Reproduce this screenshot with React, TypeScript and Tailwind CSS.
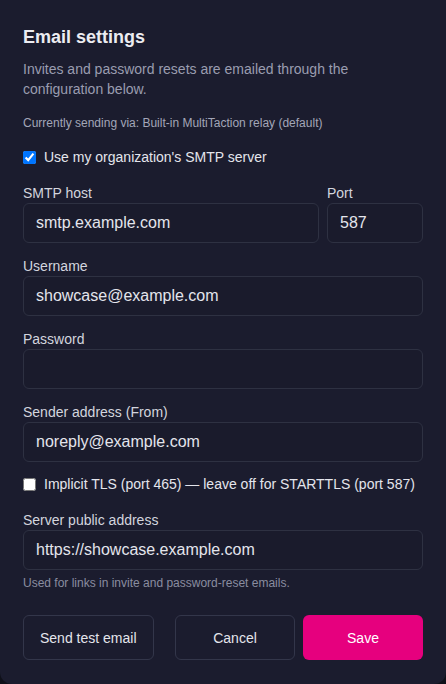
import React from "react";

function Field({ label, value, className = "" }: { label: string; value: string; className?: string }) {
  return (
    <label className={"flex flex-col " + className}>
      <span className="text-sm leading-5 text-[#d3d5de]">{label}</span>
      <input
        readOnly
        value={value}
        className="h-10 w-full rounded-md border border-[#2e3142] bg-[#1a1b2c] px-3 text-base text-[#e4e5ec] outline-none"
      />
    </label>
  );
}

export default function App() {
  return (
    <div
      className="min-h-[684px] w-full bg-[#0f1019]"
      style={{ fontFamily: '"Liberation Sans", Arial, sans-serif' }}
    >
      <div className="flex h-[684px] flex-col rounded-b-xl bg-[#1b1c2e] p-[23px]">
        <h2 className="text-lg font-bold leading-7 text-[#ececf1]">Email settings</h2>
        <p className="mt-2 text-sm leading-5 text-[#9a9db0]">
          Invites and password resets are emailed through the configuration below.
        </p>
        <p className="mt-4 text-xs leading-4 text-[#a3a6b8]">
          Currently sending via: Built-in MultiTaction relay (default)
        </p>
        <label className="mt-4 flex h-5 items-center gap-2 text-sm text-[#e4e5ec]">
          <input type="checkbox" defaultChecked className="m-0 h-[13px] w-[13px]" />
          <span>Use my organization's SMTP server</span>
        </label>

        <div className="mt-4 flex gap-2">
          <Field label="SMTP host" value="smtp.example.com" className="flex-1" />
          <Field label="Port" value="587" className="w-24" />
        </div>
        <Field label="Username" value="showcase@example.com" className="mt-[13px]" />
        <Field label="Password" value="" className="mt-[13px]" />
        <Field label="Sender address (From)" value="noreply@example.com" className="mt-[13px]" />

        <label className="mt-3 flex h-5 items-center gap-2 text-sm text-[#e4e5ec]">
          <input type="checkbox" className="m-0 h-[13px] w-[13px]" />
          <span>Implicit TLS (port 465) — leave off for STARTTLS (port 587)</span>
        </label>

        <Field label="Server public address" value="https://showcase.example.com" className="mt-4" />
        <p className="mt-[5px] text-xs leading-4 text-[#8a8da0]">
          Used for links in invite and password-reset emails.
        </p>

        <div className="mt-6 flex items-center">
          <button className="h-[45px] rounded-md border border-[#33364a] bg-transparent px-4 text-sm text-[#e4e5ec]">
            Send test email
          </button>
          <div className="flex-1" />
          <button className="h-[45px] w-[120px] rounded-md border border-[#33364a] bg-transparent text-sm text-[#e4e5ec]">
            Cancel
          </button>
          <button className="ml-2 h-[45px] w-[120px] rounded-md bg-[#e6007e] text-sm text-white">
            Save
          </button>
        </div>
      </div>
    </div>
  );
}
